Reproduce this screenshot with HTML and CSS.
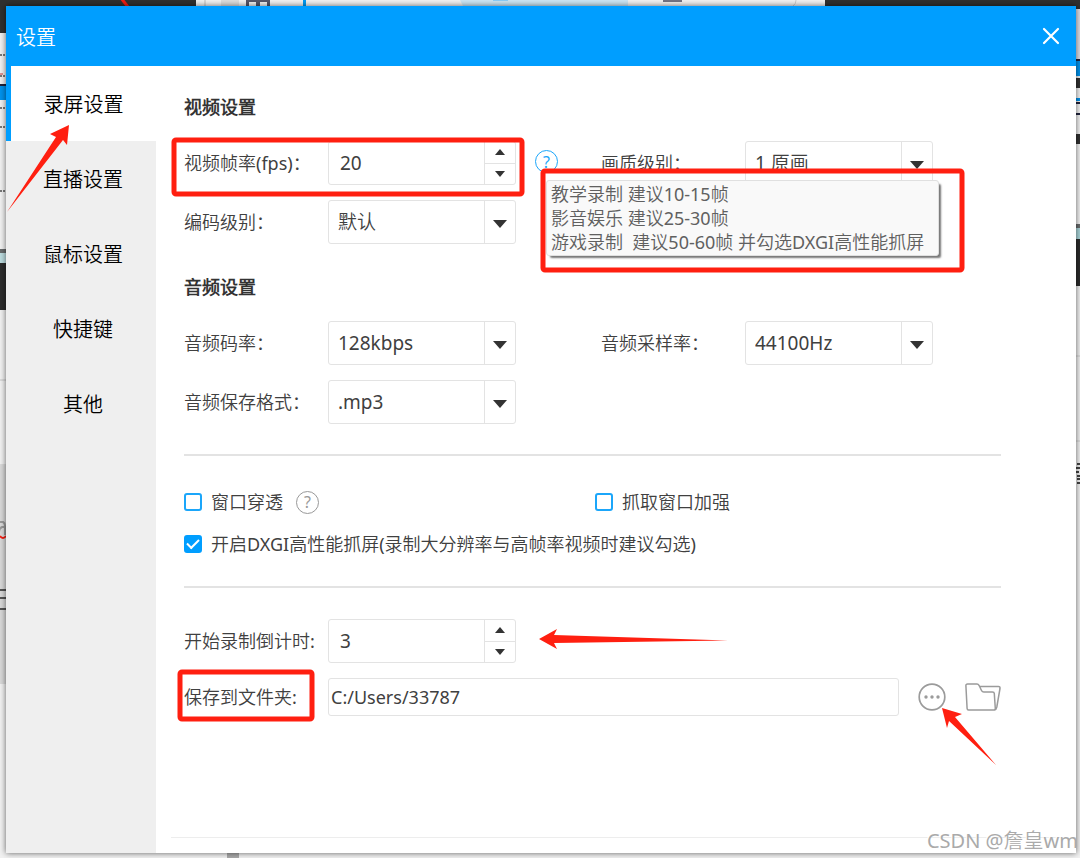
FILE: index.html
```html
<!DOCTYPE html>
<html lang="zh-CN">
<head>
<meta charset="utf-8">
<meta name="viewport" content="width=device-width, initial-scale=1">
<title>设置</title>
<link rel="stylesheet" href="styles.css">
</head>
<body>
<svg class="backdrop" width="1080" height="858" aria-hidden="true">
  <rect width="1080" height="858" fill="#f1f1f1"/>
  <rect width="196" height="33" fill="#303030"/>
  <path d="M121 -2l7 9" stroke="#f21c10" stroke-width="3"/>
  <path d="M205 0v6" stroke="#bbb"/>
  <rect x="221" width="18" height="6" fill="#ddd"/>
  <path d="M246 0h24v6h-3V2h-7v4h-4V2h-7v4h-3z" fill="#55566a"/>
  <rect x="303" width="3" height="6" fill="#009cf5"/>
  <path d="M460 0h168v6H463z" fill="#cbe5f4"/>
  <rect x="493" width="15" height="1" fill="#8acdf7"/>
  <rect x="663" width="19" height="2" fill="#747484"/>
  <path d="M796 0q0 4-3 6" stroke="#ccc" fill="none"/>
  <rect x="825" width="255" height="9" fill="#303030"/>
  <path d="M0 55h5M0 76h5M0 108h5M0 127h5M0 191h6" stroke="#777" stroke-width="2" stroke-dasharray="2 1"/>
  <path d="M0 74h3" stroke="#c33"/>
  <rect y="84" width="6" height="2" fill="#20233c"/>
  <rect y="86" width="6" height="14" fill="#0092ec"/>
  <rect y="249" width="6" height="4" fill="#686b6c"/>
  <rect y="253" width="6" height="10" fill="#bcdcdf"/>
  <rect y="263" width="6" height="47" fill="#2c2c2c"/>
  <path d="M0 380h6M0 465h6" stroke="#c4c4c4"/>
  <rect y="466" width="6" height="218" fill="#d9d9d9"/>
  <path d="M0 522h3q2 1 2 4v9M5 527H2q-3 1-3 5" fill="none" stroke="#999" stroke-width="2"/>
  <path d="M0 536q3 4 6 0" fill="none" stroke="#f21c10" stroke-width="2"/>
  <path d="M0 590h6M0 598h6M0 609h6" stroke="#555" stroke-width="2"/>
  <rect x="1076" y="9" width="4" height="50" fill="#dddde4"/>
  <rect x="1076" y="59" width="4" height="2" fill="#20233c"/>
  <rect x="1076" y="61" width="4" height="15" fill="#0092ec"/>
  <rect x="1076" y="78" width="4" height="10" fill="#303030"/>
  <rect x="1076" y="98" width="4" height="3" fill="#0092ec"/>
  <path d="M1076 103h4M1076 114h4" stroke="#20233c" stroke-width="2"/>
  <rect x="1076" y="134" width="4" height="10" fill="#303030"/>
  <rect x="1076" y="224" width="4" height="4" fill="#686b6c"/>
  <rect x="1076" y="228" width="4" height="11" fill="#a9d3d7"/>
  <rect x="1076" y="239" width="4" height="47" fill="#2c2c2c"/>
  <path d="M1076 356h4M1076 441h4" stroke="#ccc"/>
  <path d="M1077 464h3M1076 468h4M1076 472h3M1077 476h3M1077 479h3M1077 483h3" stroke="#444" stroke-width="2"/>
  <rect x="227" y="853" width="12" height="5" fill="#aaa"/>
</svg>

<div class="dialog" role="dialog" aria-labelledby="dialog-title">
  <header class="titlebar">
    <h1 class="title" id="dialog-title">设置</h1>
    <button class="close" type="button" aria-label="关闭">
      <svg width="18" height="18" viewBox="0 0 18 18"><path d="M2 2l14 14M16 2L2 16" stroke="#fff" stroke-width="2.2" stroke-linecap="round"/></svg>
    </button>
  </header>
  <div class="body">
    <nav class="sidebar">
      <button class="tab tab-active" type="button">录屏设置</button>
      <button class="tab" type="button">直播设置</button>
      <button class="tab" type="button">鼠标设置</button>
      <button class="tab" type="button">快捷键</button>
      <button class="tab" type="button">其他</button>
    </nav>
    <main class="content">
      <form class="form">
        <h2 class="heading">视频设置</h2>
        <div class="grid">
          <div class="field">
            <label class="label" for="fps">视频帧率(fps)：</label>
            <span class="spinner">
              <input class="spin-input" id="fps" type="text" value="20">
              <span class="steps">
                <button class="step" type="button" aria-label="增加"><span class="up"></span></button>
                <button class="step" type="button" aria-label="减少"><span class="down"></span></button>
              </span>
            </span>
            <span class="help-wrap">
              <button class="help help-blue" type="button" aria-label="帧率说明" aria-describedby="fps-tip">?</button>
              <span class="tooltip" id="fps-tip" role="tooltip">教学录制 建议10-15帧<br>影音娱乐 建议25-30帧<br>游戏录制  建议50-60帧 并勾选DXGI高性能抓屏</span>
            </span>
          </div>
          <div class="field">
            <label class="label" for="quality">画质级别：</label>
            <span class="select"><select class="select-box" id="quality"><option>1 原画</option></select></span>
          </div>
          <div class="field">
            <label class="label" for="codec">编码级别：</label>
            <span class="select"><select class="select-box" id="codec"><option>默认</option></select></span>
          </div>
        </div>
        <h2 class="heading heading-next">音频设置</h2>
        <div class="grid">
          <div class="field">
            <label class="label" for="bitrate">音频码率：</label>
            <span class="select"><select class="select-box" id="bitrate"><option>128kbps</option></select></span>
          </div>
          <div class="field">
            <label class="label" for="rate">音频采样率：</label>
            <span class="select"><select class="select-box" id="rate"><option>44100Hz</option></select></span>
          </div>
          <div class="field">
            <label class="label" for="format">音频保存格式：</label>
            <span class="select"><select class="select-box" id="format"><option>.mp3</option></select></span>
          </div>
        </div>
        <hr class="rule">
        <div class="checks">
          <div class="check-row">
            <label class="check"><input class="box" type="checkbox">窗口穿透</label>
            <button class="help" type="button" aria-label="窗口穿透说明">?</button>
          </div>
          <div class="check-row">
            <label class="check"><input class="box" type="checkbox">抓取窗口加强</label>
          </div>
          <div class="check-row check-wide">
            <label class="check"><input class="box" type="checkbox" checked>开启DXGI高性能抓屏(录制大分辨率与高帧率视频时建议勾选)</label>
          </div>
        </div>
        <hr class="rule">
        <div class="rows">
          <div class="field">
            <label class="label" for="countdown">开始录制倒计时:</label>
            <span class="spinner">
              <input class="spin-input" id="countdown" type="text" value="3">
              <span class="steps">
                <button class="step" type="button" aria-label="增加"><span class="up"></span></button>
                <button class="step" type="button" aria-label="减少"><span class="down"></span></button>
              </span>
            </span>
          </div>
          <div class="field">
            <label class="label" for="folder">保存到文件夹:</label>
            <input class="path" id="folder" type="text" value="C:/Users/33787">
            <button class="icon" type="button" aria-label="选择文件夹">
              <svg width="28" height="28" viewBox="0 0 28 28"><circle cx="14" cy="14" r="12.8" fill="none" stroke="#9b9b9b" stroke-width="1.7"/><g fill="#9b9b9b"><circle cx="8" cy="14" r="1.7"/><circle cx="14" cy="14" r="1.7"/><circle cx="20" cy="14" r="1.7"/></g></svg>
            </button>
            <button class="icon" type="button" aria-label="打开文件夹">
              <svg width="36" height="28" viewBox="0 0 36 28" fill="none" stroke="#9b9b9b" stroke-width="1.5" stroke-linejoin="round" stroke-linecap="round"><path d="M3.5 27Q2.2 27 2.1 25.5L.9 2.8Q.8 1 2.5 1H12Q13.300 1 14 2.300L16.500 7.500Q17.200 9 18.800 9H27.500Q29.200 9 29.300 10.500L30.300 25.500Q30.300 27 29 27ZM14.800 3.500H33.500Q35.300 3.500 35 5.500L31.800 24Q31.300 26.500 29.500 27"/></svg>
            </button>
          </div>
        </div>
      </form>
      <footer class="footer"></footer>
    </main>
  </div>
</div>

<svg class="marks" width="1080" height="858" aria-hidden="true">
  <g fill="none" stroke="#ff1f10" stroke-width="5">
    <rect x="174" y="140" width="348" height="54" rx="2"/>
    <rect x="543" y="171" width="419" height="99" rx="2"/>
    <rect x="180" y="672" width="132" height="47" rx="2"/>
  </g>
  <g fill="#ff1f10">
    <path d="M7 212L56 137 50 134 69 125 67 145 63 140Z"/>
    <path d="M539 639L557 629 554 635 728 640.500 554 643 557 649Z"/>
    <path d="M942 708L962 714 955 717 996 765 949 721 947 728Z"/>
  </g>
</svg>
<div class="watermark">CSDN @詹皇wm</div>
</body>
</html>
```
FILE: styles.css
```css
* {
  box-sizing: border-box;
}

body {
  margin: 0;
  min-height: 100vh;
  padding: 6px 4px 5px 6px;
  display: flex;
  position: relative;
  overflow: hidden;
  font: 400 18px/24px "Noto Sans", "Noto Sans CJK SC DemiLight", "Noto Sans CJK SC", sans-serif;
  color: #404040;
}

button,
input,
select {
  font: inherit;
  color: inherit;
}

button {
  padding: 0;
  border: 0;
  background: none;
}

.backdrop,
.marks {
  position: absolute;
  top: 0;
  left: 0;
  pointer-events: none;
}

.dialog {
  position: relative;
  flex: 1;
  display: flex;
  flex-direction: column;
  background: #fff;
  box-shadow: 0 0 6px rgba(0, 0, 0, 0.6);
}

.titlebar {
  height: 60px;
  padding: 0 16px 0 10px;
  display: flex;
  align-items: center;
  justify-content: space-between;
  background: #009eff;
  color: #fff;
}

.title {
  margin: 0;
  padding-top: 3px;
  font-size: 20px;
  font-weight: 400;
}

.close {
  display: flex;
}

.body {
  flex: 1;
  display: flex;
}

.sidebar {
  width: 150px;
  display: flex;
  flex-direction: column;
  background: #efefef;
}

.tab {
  height: 75px;
  padding: 2px 0 0 4px;
  font-size: 20px;
  color: #000;
}

.tab-active {
  padding-left: 0;
  border-left: 5px solid #009eff;
  background: #fff;
}

.content {
  flex: 1;
  display: flex;
  flex-direction: column;
  justify-content: space-between;
}

.form {
  padding: 29px 75px 0 28px;
}

.heading {
  margin: 0 0 22px;
  font-size: 18px;
  line-height: 24px;
  font-weight: 700;
  color: #333;
}

.heading-next {
  margin-top: 31px;
}

.grid {
  display: grid;
  grid-template-columns: 417px 1fr;
  row-gap: 15px;
}

.field {
  display: flex;
  align-items: center;
}

.label {
  width: 144px;
  flex: none;
  white-space: nowrap;
}

.spinner,
.select {
  width: 188px;
  height: 44px;
  flex: none;
  display: flex;
  position: relative;
  border: 1px solid #e3e3e3;
  border-radius: 3px;
  font-size: 19px;
}

.spin-input {
  flex: 1;
  min-width: 0;
  padding: 0 11px;
  border: 0;
  background: none;
}

.steps {
  width: 31px;
  display: flex;
  flex-direction: column;
  border-left: 1px solid #e3e3e3;
}

.step {
  flex: 1;
  display: flex;
  align-items: center;
  justify-content: center;
}

.step + .step {
  border-top: 1px solid #e3e3e3;
}

.up,
.down {
  border: 5px solid transparent;
}

.up {
  border-top: 0;
  border-bottom: 6px solid #333;
}

.down {
  border-bottom: 0;
  border-top: 6px solid #333;
}

.select-box {
  flex: 1;
  appearance: none;
  padding: 0 40px 0 9px;
  border: 0;
  background: none;
}

.select::after {
  content: "";
  position: absolute;
  right: 8px;
  top: 19px;
  border: 7px solid transparent;
  border-top: 8px solid #333;
  border-bottom: 0;
  pointer-events: none;
}

.select::before {
  content: "";
  position: absolute;
  right: 30px;
  top: 0;
  bottom: 0;
  border-left: 1px solid #e3e3e3;
}

.help-wrap {
  position: relative;
  display: flex;
  margin-left: 19px;
  padding-bottom: 3px;
}

.help {
  width: 23px;
  height: 23px;
  border: 1px solid #999;
  border-radius: 50%;
  font-size: 16px;
  line-height: 20px;
  color: #999;
}

.help-blue {
  border-color: #1ba6fa;
  color: #1ba6fa;
}

.tooltip {
  position: absolute;
  z-index: 1;
  top: 30px;
  left: 11px;
  padding: 1px 14px 1px 4px;
  white-space: pre;
  border: 1px solid #e0e0e0;
  border-radius: 3px;
  background: #f9f9f9;
  color: #606060;
  box-shadow: 3px 3px 2px -1px #777;
}

.rule {
  height: 2px;
  margin: 30px 0 34px;
  border: 0;
  background: #e3e3e3;
}

.rule + .rows {
  margin-top: -3px;
}

.checks {
  display: grid;
  grid-template-columns: 411px 1fr;
  row-gap: 18px;
}

.check-row {
  display: flex;
  align-items: center;
  gap: 13px;
  height: 24px;
}

.check-wide {
  grid-column: 1 / -1;
}

.check {
  display: flex;
  align-items: center;
  gap: 9px;
  white-space: nowrap;
}

.box {
  appearance: none;
  width: 18px;
  height: 18px;
  margin: 0;
  border: 2px solid #1ba6fa;
  border-radius: 3px;
  background: #fff;
}

.box:checked {
  display: flex;
  align-items: center;
  justify-content: center;
  border-color: #009eff;
  background: #009eff;
}

.box:checked::after {
  content: "";
  width: 10px;
  height: 5px;
  margin-bottom: 3px;
  border-left: 2px solid #fff;
  border-bottom: 2px solid #fff;
  transform: rotate(-45deg);
}

.rows {
  display: flex;
  flex-direction: column;
  gap: 15px;
}

.path {
  flex: 1;
  min-width: 0;
  height: 38px;
  padding: 0 2px;
  border: 1px solid #e3e3e3;
  border-radius: 3px;
}

.icon {
  display: flex;
  margin-left: 19px;
}

.footer {
  height: 16px;
  margin-left: 15px;
  border-top: 1px solid #ededed;
}

.watermark {
  position: absolute;
  right: 2px;
  bottom: 5px;
  font-size: 20px;
  color: #aaa;
  text-shadow: -1px -1px 0 #fff;
}
```
